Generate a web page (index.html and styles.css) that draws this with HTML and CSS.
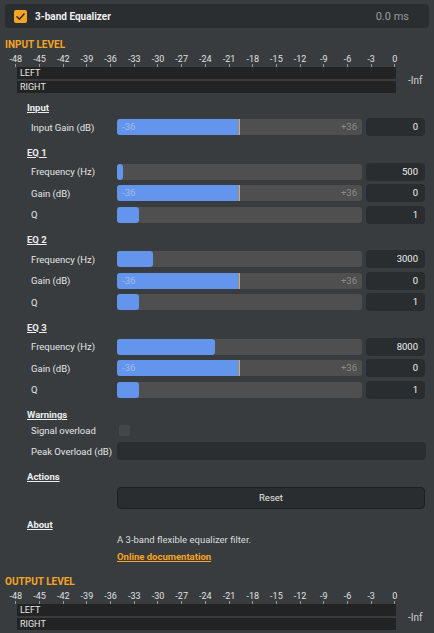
FILE: index.html
```html
<!DOCTYPE html>
<html>
<head>
<meta charset="utf-8">
<link rel="stylesheet" href="styles.css">
</head>
<body>
<div class="header">
  <span class="check"><svg width="13" height="13" viewBox="0 0 13 13"><path d="M3 6.8 L5.4 9.2 L10 4" fill="none" stroke="#3a3020" stroke-width="1.6" stroke-linecap="round" stroke-linejoin="round"/></svg></span>
  <span class="title">3-band Equalizer</span>
  <span class="time">0.0 ms</span>
</div>

<div class="level">
  <div class="level-title">INPUT LEVEL</div>
  <div class="scale"><span>-48</span><span>-45</span><span>-42</span><span>-39</span><span>-36</span><span>-33</span><span>-30</span><span>-27</span><span>-24</span><span>-21</span><span>-18</span><span>-15</span><span>-12</span><span>-9</span><span>-6</span><span>-3</span><span>0</span></div>
  <div class="meter-wrap">
    <div class="meters"><div class="meter">LEFT</div><div class="meter">RIGHT</div></div>
    <div class="inf">-Inf</div>
  </div>
</div>

<div class="sections">
  <div class="section">
    <div class="sec-head">Input</div>
    <div class="row">
      <div class="label">Input Gain (dB)</div>
      <div class="slider"><div class="fill gain" style="width:123px"></div><span class="min">-36</span><span class="max">+36</span></div>
      <div class="value">0</div>
    </div>
  </div>

  <div class="section">
    <div class="sec-head">EQ 1</div>
    <div class="row">
      <div class="label">Frequency (Hz)</div>
      <div class="slider"><div class="fill" style="width:6px"></div></div>
      <div class="value">500</div>
    </div>
    <div class="row">
      <div class="label">Gain (dB)</div>
      <div class="slider"><div class="fill gain" style="width:123px"></div><span class="min">-36</span><span class="max">+36</span></div>
      <div class="value">0</div>
    </div>
    <div class="row">
      <div class="label">Q</div>
      <div class="slider"><div class="fill" style="width:22px"></div></div>
      <div class="value">1</div>
    </div>
  </div>

  <div class="section">
    <div class="sec-head">EQ 2</div>
    <div class="row">
      <div class="label">Frequency (Hz)</div>
      <div class="slider"><div class="fill" style="width:36px"></div></div>
      <div class="value">3000</div>
    </div>
    <div class="row">
      <div class="label">Gain (dB)</div>
      <div class="slider"><div class="fill gain" style="width:123px"></div><span class="min">-36</span><span class="max">+36</span></div>
      <div class="value">0</div>
    </div>
    <div class="row">
      <div class="label">Q</div>
      <div class="slider"><div class="fill" style="width:22px"></div></div>
      <div class="value">1</div>
    </div>
  </div>

  <div class="section">
    <div class="sec-head">EQ 3</div>
    <div class="row">
      <div class="label">Frequency (Hz)</div>
      <div class="slider"><div class="fill" style="width:98px"></div></div>
      <div class="value">8000</div>
    </div>
    <div class="row">
      <div class="label">Gain (dB)</div>
      <div class="slider"><div class="fill gain" style="width:123px"></div><span class="min">-36</span><span class="max">+36</span></div>
      <div class="value">0</div>
    </div>
    <div class="row">
      <div class="label">Q</div>
      <div class="slider"><div class="fill" style="width:22px"></div></div>
      <div class="value">1</div>
    </div>
  </div>

  <div class="section">
    <div class="sec-head">Warnings</div>
    <div class="row small">
      <div class="label">Signal overload</div>
      <div class="cbox"></div>
    </div>
    <div class="row tight">
      <div class="label">Peak Overload (dB)</div>
      <div class="wide-box"></div>
    </div>
  </div>

  <div class="section">
    <div class="sec-head">Actions</div>
    <div class="row btn-row">
      <div class="label"></div>
      <div class="button">Reset</div>
    </div>
  </div>

  <div class="section">
    <div class="sec-head">About</div>
    <div class="about">
      <div class="desc">A 3-band flexible equalizer filter.</div>
      <div class="link">Online documentation</div>
    </div>
  </div>
</div>

<div class="level out">
  <div class="level-title">OUTPUT LEVEL</div>
  <div class="scale"><span>-48</span><span>-45</span><span>-42</span><span>-39</span><span>-36</span><span>-33</span><span>-30</span><span>-27</span><span>-24</span><span>-21</span><span>-18</span><span>-15</span><span>-12</span><span>-9</span><span>-6</span><span>-3</span><span>0</span></div>
  <div class="meter-wrap">
    <div class="meters"><div class="meter">LEFT</div><div class="meter">RIGHT</div></div>
    <div class="inf">-Inf</div>
  </div>
</div>
</body>
</html>
```
FILE: styles.css
```css
* { box-sizing: border-box; }
html, body {
  margin: 0;
  padding: 0;
  background: #383c3f;
  color: #e4e4e4;
  font-family: Roboto, "Liberation Sans", sans-serif;
  font-size: 9.5px;
  width: 434px;
  height: 633px;
  overflow: hidden;
}
.header {
  margin: 4px 5px 0;
  height: 24px;
  background: #2b2e30;
  border-radius: 4px;
  display: flex;
  align-items: center;
  padding: 0 20px 0 9px;
}
.check {
  width: 13px;
  height: 13px;
  background: #f5a524;
  border-radius: 2px;
  display: flex;
}
.title {
  margin-left: 8px;
  font-size: 10px;
  font-weight: bold;
  color: #f0f0f0;
}
.time {
  margin-left: auto;
  font-size: 11px;
  color: #9a9a9a;
}
.level { margin-top: 11px; }
.level.out { margin-top: 12px; }
.level-title {
  padding-left: 5px;
  line-height: 12px;
  height: 12px;
  font-size: 10px;
  font-weight: bold;
  color: #f5a524;
}
.scale {
  margin-top: 3px;
  margin-left: 4px;
  display: grid;
  grid-template-columns: repeat(17, 23.7px);
  height: 13px;
}
.scale span {
  font-size: 9px;
  line-height: 10px;
  text-align: center;
  color: #e0e0e0;
}
.scale span::after {
  content: "";
  display: block;
  width: 1px;
  height: 3px;
  margin: 0 auto;
  background: #9a9a9a;
}
.meter-wrap {
  display: flex;
  align-items: center;
}
.meters {
  margin-left: 17px;
  width: 379px;
  display: flex;
  flex-direction: column;
  gap: 2px;
}
.meter {
  height: 12px;
  background: #232323;
  font-size: 9px;
  line-height: 12px;
  padding-left: 3px;
  color: #e8e8e8;
}
.inf {
  margin-left: 12px;
  font-size: 10px;
  color: #cfcfcf;
}
.sections { margin-top: 8px; padding-left: 27px; }
.section + .section { margin-top: 9.5px; }
.sec-head {
  font-weight: bold;
  line-height: 14px;
  height: 14px;
  text-decoration: underline;
  color: #ececec;
}
.row {
  display: flex;
  align-items: center;
  height: 18px;
  margin-top: 3.5px;
}
.sec-head + .row { margin-top: 3px; }
.row.small { height: 14px; margin-top: 1px; }
.row.tight { margin-top: 5px; }
.label {
  width: 90px;
  padding-left: 4px;
  color: #e4e4e4;
  white-space: nowrap;
}
.slider {
  position: relative;
  width: 245px;
  height: 16px;
  background: #4f4f4f;
  border-radius: 3px;
  display: flex;
}
.fill {
  height: 16px;
  background: #6495ed;
  border-radius: 3px;
}
.fill.gain {
  border-radius: 3px 0 0 3px;
  border-right: 1px solid #f5a524;
}
.min, .max {
  position: absolute;
  top: 0;
  line-height: 16px;
}
.min { left: 5px; color: #a3bbe8; }
.max { right: 5px; color: #8c8c8c; }
.value {
  margin-left: 4px;
  width: 59px;
  height: 18px;
  line-height: 18px;
  background: #2a2d2f;
  border-radius: 4px;
  text-align: right;
  padding-right: 7px;
  color: #f0f0f0;
}
.cbox {
  margin-left: 2px;
  width: 11px;
  height: 11px;
  background: #44484b;
  border-radius: 2px;
}
.wide-box {
  width: 309px;
  height: 18px;
  background: #2b2e30;
  border-radius: 4px;
}
.btn-row { height: 22px; margin-top: 3px; }
.button {
  width: 308px;
  height: 22px;
  border: 1.5px solid #1d1f20;
  background: #2a2d2f;
  border-radius: 4px;
  text-align: center;
  line-height: 19px;
  color: #e8e8e8;
}
.about {
  padding-left: 90px;
  margin-top: 1px;
}
.desc {
  line-height: 14px;
  color: #dcdcdc;
}
.link {
  margin-top: 3px;
  line-height: 14px;
  font-weight: bold;
  color: #f5a524;
  text-decoration: underline;
}
```
